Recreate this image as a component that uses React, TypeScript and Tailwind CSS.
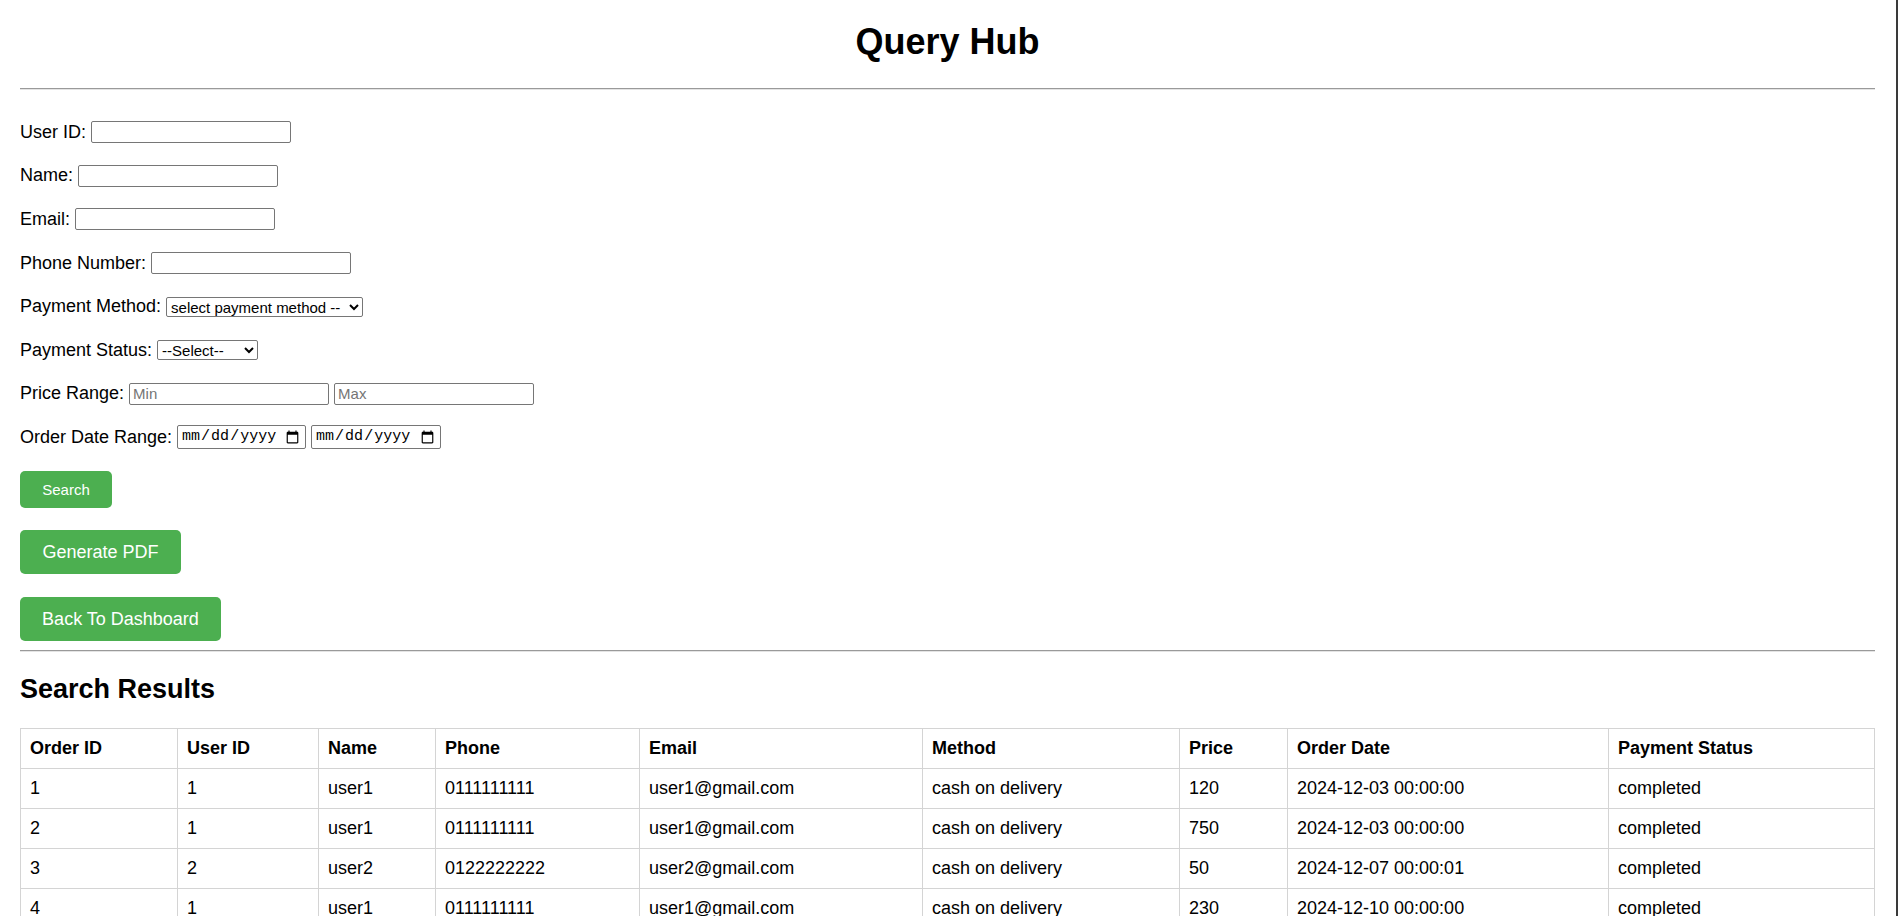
import { useState } from 'react';

type Order = {
  orderId: number;
  userId: number;
  name: string;
  phone: string;
  email: string;
  method: string;
  price: number;
  orderDate: string;
  status: string;
};

const orders: Order[] = [
  { orderId: 1, userId: 1, name: 'user1', phone: '0111111111', email: 'user1@gmail.com', method: 'cash on delivery', price: 120, orderDate: '2024-12-03 00:00:00', status: 'completed' },
  { orderId: 2, userId: 1, name: 'user1', phone: '0111111111', email: 'user1@gmail.com', method: 'cash on delivery', price: 750, orderDate: '2024-12-03 00:00:00', status: 'completed' },
  { orderId: 3, userId: 2, name: 'user2', phone: '0122222222', email: 'user2@gmail.com', method: 'cash on delivery', price: 50, orderDate: '2024-12-07 00:00:01', status: 'completed' },
  { orderId: 4, userId: 1, name: 'user1', phone: '0111111111', email: 'user1@gmail.com', method: 'cash on delivery', price: 230, orderDate: '2024-12-10 00:00:00', status: 'completed' },
];

const columns = [
  { label: 'Order ID', w: 'w-[157px]' },
  { label: 'User ID', w: 'w-[141px]' },
  { label: 'Name', w: 'w-[117px]' },
  { label: 'Phone', w: 'w-[204px]' },
  { label: 'Email', w: 'w-[283px]' },
  { label: 'Method', w: 'w-[257px]' },
  { label: 'Price', w: 'w-[108px]' },
  { label: 'Order Date', w: 'w-[321px]' },
  { label: 'Payment Status', w: '' },
];

const inputCls =
  'h-[22px] w-[200px] border border-[#767676] rounded-[2px] bg-white px-[3px] text-[15px] outline-none placeholder:text-[#757575]';

const dateCls =
  'h-[24px] border border-[#767676] rounded-[2px] bg-white px-[3px] font-["Liberation_Mono",monospace] text-[15px]';

function Row({ label, children }: { label: string; children: React.ReactNode }) {
  return (
    <div className="flex h-[43.6px] items-center gap-[5px]">
      <label className="text-[18px] leading-[21px]">{label}</label>
      {children}
    </div>
  );
}

function Divider() {
  return <div className="h-[2px] border-t border-t-[#9a9a9a] border-b border-b-[#e4e4e4]" />;
}

export default function App() {
  const [method, setMethod] = useState('');
  const [status, setStatus] = useState('');

  return (
    <div className="flex min-h-screen bg-white font-['Liberation_Sans',Arial,sans-serif] text-black">
      <div className="flex-1 pl-[20px] pr-[21px] pb-[20px]">
        <h1 className="pt-[21px] h-[62px] text-center text-[36px] font-bold leading-[41px]">Query Hub</h1>
        <div className="mt-[26px]">
          <Divider />
        </div>

        <form className="mt-[20.5px]" onSubmit={(e) => e.preventDefault()}>
          <Row label="User ID:">
            <input type="text" className={inputCls} />
          </Row>
          <Row label="Name:">
            <input type="text" className={inputCls} />
          </Row>
          <Row label="Email:">
            <input type="text" className={inputCls} />
          </Row>
          <Row label="Phone Number:">
            <input type="text" className={inputCls} />
          </Row>
          <Row label="Payment Method:">
            <select
              value={method}
              onChange={(e) => setMethod(e.target.value)}
              className="h-[20px] w-[197px] border border-[#767676] rounded-[2px] bg-white text-[15px] leading-[18px]"
            >
              <option value="">select payment method --</option>
              <option value="cash">cash on delivery</option>
              <option value="card">credit card</option>
            </select>
          </Row>
          <Row label="Payment Status:">
            <select
              value={status}
              onChange={(e) => setStatus(e.target.value)}
              className="h-[20px] w-[101px] border border-[#767676] rounded-[2px] bg-white text-[15px] leading-[18px]"
            >
              <option value="">--Select--</option>
              <option value="completed">completed</option>
              <option value="pending">pending</option>
            </select>
          </Row>
          <Row label="Price Range:">
            <input type="number" placeholder="Min" className={inputCls} />
            <input type="number" placeholder="Max" className={inputCls} />
          </Row>
          <Row label="Order Date Range:">
            <input type="date" className={`${dateCls} w-[129px]`} />
            <input type="date" className={`${dateCls} w-[130px]`} />
          </Row>

          <button
            type="submit"
            className="mt-[12px] block h-[37px] w-[92px] rounded-[5px] bg-[#4caf50] text-[15px] leading-[17px] text-white"
          >
            Search
          </button>
        </form>

        <button className="mt-[22px] block h-[44px] w-[161px] rounded-[5px] bg-[#4caf50] text-[18px] text-white">
          Generate PDF
        </button>
        <button className="mt-[23px] block h-[44px] w-[201px] rounded-[5px] bg-[#4caf50] text-[18px] text-white">
          Back To Dashboard
        </button>

        <div className="mt-[9px]">
          <Divider />
        </div>

        <h2 className="mt-[22px] text-[27px] font-bold leading-[31px]">Search Results</h2>

        <table className="mt-[23px] w-full border-collapse text-[18px] leading-[21px]">
          <thead>
            <tr>
              {columns.map((c) => (
                <th key={c.label} className={`${c.w} border border-[#d4d4d4] px-[9px] py-[9px] text-left font-bold`}>
                  {c.label}
                </th>
              ))}
            </tr>
          </thead>
          <tbody>
            {orders.map((o) => (
              <tr key={o.orderId}>
                <td className="border border-[#d4d4d4] px-[9px] py-[9px]">{o.orderId}</td>
                <td className="border border-[#d4d4d4] px-[9px] py-[9px]">{o.userId}</td>
                <td className="border border-[#d4d4d4] px-[9px] py-[9px]">{o.name}</td>
                <td className="border border-[#d4d4d4] px-[9px] py-[9px]">{o.phone}</td>
                <td className="border border-[#d4d4d4] px-[9px] py-[9px]">{o.email}</td>
                <td className="border border-[#d4d4d4] px-[9px] py-[9px]">{o.method}</td>
                <td className="border border-[#d4d4d4] px-[9px] py-[9px]">{o.price}</td>
                <td className="border border-[#d4d4d4] px-[9px] py-[9px]">{o.orderDate}</td>
                <td className="border border-[#d4d4d4] px-[9px] py-[9px]">{o.status}</td>
              </tr>
            ))}
          </tbody>
        </table>
      </div>
      <div className="w-[2px] shrink-0 bg-[#3a3a3a]" />
    </div>
  );
}
